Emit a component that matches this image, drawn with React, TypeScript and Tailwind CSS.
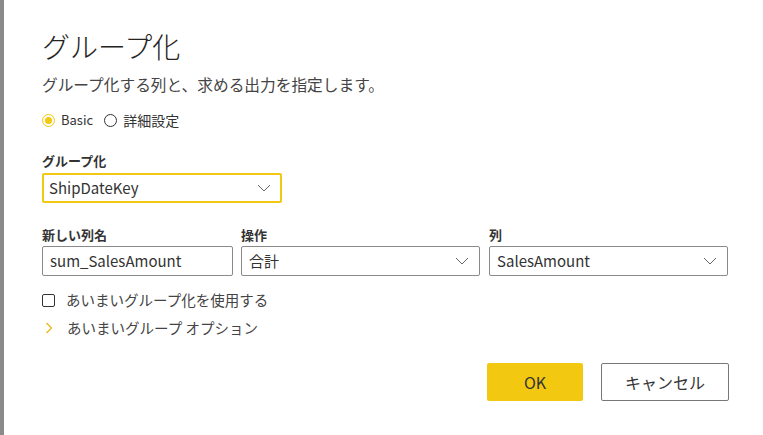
import React from "react";

const Chevron = () => (
  <svg width="14" height="8" viewBox="0 0 14 8" fill="none">
    <path d="M1 1l6 6 6-6" stroke="#666" strokeWidth="1" />
  </svg>
);

const Select = ({ value, className }: { value: string; className: string }) => (
  <div className={`flex items-center justify-between h-[30px] rounded-[2px] border border-[#8a8a8a] bg-white pl-[7px] pr-[10px] ${className}`}>
    <span className="text-[15px] text-[#333]">{value}</span>
    <Chevron />
  </div>
);

export default function App() {
  return (
    <div
      className="flex w-[763px] h-[435px] bg-white overflow-hidden"
      style={{ fontFamily: '"Segoe UI", "Noto Sans CJK JP", sans-serif' }}
    >
      <div className="w-[4px] h-full bg-[#8a8a8a]" />
      <div className="flex flex-col pl-[38px] pt-[28px] text-[#333]">
        <div className="text-[28px] leading-[36px] font-light text-[#252423]">グループ化</div>
        <div className="mt-[10px] text-[15.7px] leading-[22px] text-[#444]">グループ化する列と、求める出力を指定します。</div>
        <div className="mt-[14px] flex items-center h-[20px] text-[13px] text-[#333]">
          <span className="flex items-center justify-center w-[13px] h-[13px] rounded-full border border-[#F2C811]">
            <span className="w-[7px] h-[7px] rounded-full bg-[#F2C811]" />
          </span>
          <span className="ml-[6px]">Basic</span>
          <span className="ml-[11px] w-[13px] h-[13px] rounded-full border border-[#333]" />
          <span className="ml-[6px] text-[14px]">詳細設定</span>
        </div>
        <div className="mt-[22px] text-[13px] leading-[18px] font-bold text-[#333]">グループ化</div>
        <div className="mt-[3px] flex items-center justify-between w-[240px] h-[30px] rounded-[2px] border-2 border-[#F2C811] pl-[5px] pr-[9px]">
          <span className="text-[15px] text-[#333]">ShipDateKey</span>
          <Chevron />
        </div>
        <div className="mt-[23px] flex">
          <div className="flex flex-col w-[191px]">
            <div className="text-[13px] leading-[18px] font-bold">新しい列名</div>
            <div className="mt-[2px] flex items-center h-[30px] rounded-[2px] border border-[#8a8a8a] pl-[7px] text-[15px] text-[#333]">sum_SalesAmount</div>
          </div>
          <div className="flex flex-col w-[239px] ml-[8px]">
            <div className="text-[13px] leading-[18px] font-bold">操作</div>
            <Select value="合計" className="mt-[2px]" />
          </div>
          <div className="flex flex-col w-[239px] ml-[9px]">
            <div className="text-[13px] leading-[18px] font-bold">列</div>
            <Select value="SalesAmount" className="mt-[2px]" />
          </div>
        </div>
        <div className="mt-[13px] flex items-center h-[22px] text-[14.5px] text-[#444]">
          <span className="w-[13px] h-[13px] rounded-[2px] border border-[#333]" />
          <span className="ml-[11px]">あいまいグループ化を使用する</span>
        </div>
        <div className="mt-[6px] flex items-center h-[22px] text-[14.5px] text-[#444]">
          <svg width="8" height="12" viewBox="0 0 8 12" className="ml-[3px]" fill="none">
            <path d="M1.5 1l5 5-5 5" stroke="#E8B511" strokeWidth="1.2" />
          </svg>
          <span className="ml-[14px]">あいまいグループ オプション</span>
        </div>
        <div className="mt-[24px] flex w-[687px] justify-end gap-[18px]">
          <button className="w-[96px] h-[38px] rounded-[2px] bg-[#F2C811] text-[16px] text-[#333]">OK</button>
          <button className="w-[128px] h-[38px] rounded-[2px] border border-[#777] bg-white text-[16px] text-[#333]">キャンセル</button>
        </div>
      </div>
    </div>
  );
}
